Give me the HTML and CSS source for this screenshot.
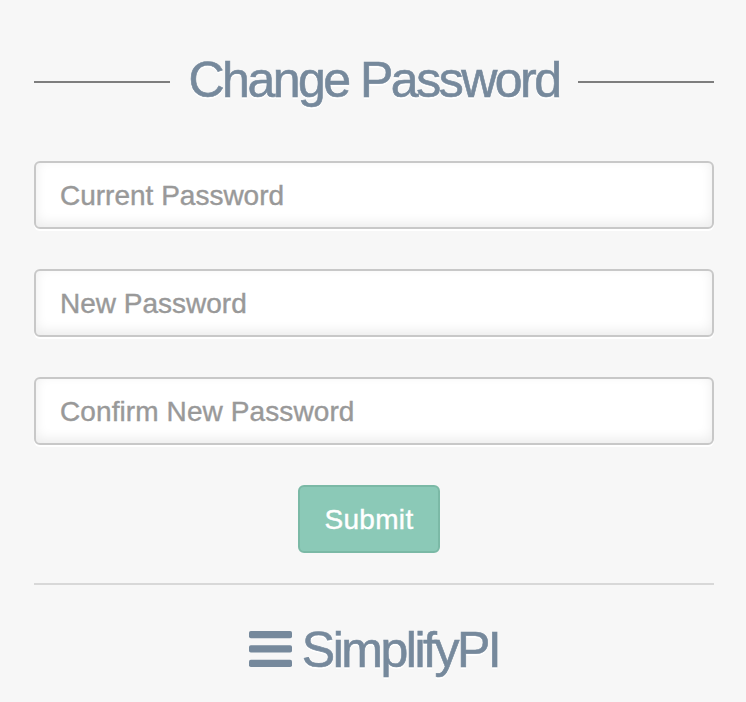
FILE: index.html
```html
<!DOCTYPE html>
<html lang="en">
<head>
    <meta charset="UTF-8">
    <meta name="viewport" content="width=device-width, initial-scale=1.0">
    <title>Change Password</title>
    <link rel="stylesheet" href="styles.css">
</head>
<body>
    <section class="login-content">
        <form>
            <h1><span>Change Password</span></h1>
            <input type="password" class="form-control" placeholder="Current Password">
            <input type="password" class="form-control" placeholder="New Password">
            <input type="password" class="form-control confirm" placeholder="Confirm New Password">
            <button type="button" class="submit">Submit</button>
        </form>

        <!-- Footer with brand -->
        <div class="separator">
            <svg class="bars" width="43" height="36" viewBox="0 0 43 36">
                <rect x="0" y="0" width="43" height="7.3" rx="1.8"/>
                <rect x="0" y="14.3" width="43" height="7.3" rx="1.8"/>
                <rect x="0" y="28.7" width="43" height="7.3" rx="1.8"/>
            </svg>
            <span class="brand">SimplifyPI</span>
        </div>
    </section>
</body>
</html>
```
FILE: styles.css
```css
* {
    box-sizing: border-box;
}
body {
    margin: 0;
    background-color: #f7f7f7;
    color: #76899c;
    font-family: "Liberation Sans", Helvetica, Arial, sans-serif;
}
.login-content {
    width: 680px;
    margin-left: 34px;
    padding-top: 50px;
    text-align: center;
    text-shadow: 0 2px 0 #fff;
}
h1 {
    display: flex;
    align-items: center;
    gap: 18px;
    height: 60px;
    margin: 0 0 51px;
    font-size: 50px;
    font-weight: normal;
    letter-spacing: -2.5px;
    white-space: nowrap;
    -webkit-text-stroke: 0.6px #76899c;
}
/* Lines on both sides of the heading */
h1::before,
h1::after {
    content: "";
    flex: 1;
    height: 2px;
    margin-top: 3px;
    background-color: #7e7e7e;
}
.form-control {
    display: block;
    width: 100%;
    height: 68px;
    margin: 0 0 40px;
    padding: 2px 24px 0;
    border: 2px solid #c8c8c8;
    border-radius: 6px;
    background-color: #fff;
    box-shadow: 0 2px 0 #fff, inset 0 -4px 12px rgba(0, 0, 0, 0.08);
    font-family: inherit;
    font-size: 28px;
}
.form-control::placeholder {
    color: #999;
    -webkit-text-stroke: 0.4px #999;
}
.confirm {
    letter-spacing: 0.1px;
}
.submit {
    display: block;
    width: 142px;
    height: 68px;
    margin: 0 0 0 264px;
    padding: 2px 0 0;
    border: 2px solid #7bb9a6;
    border-radius: 6px;
    background-color: #8bc9b7;
    color: #fff;
    font-family: inherit;
    font-size: 28px;
    letter-spacing: 0.3px;
    -webkit-text-stroke: 0.4px #fff;
}
.separator {
    display: flex;
    justify-content: center;
    align-items: center;
    gap: 10px;
    margin-top: 30px;
    padding-top: 35px;
    border-top: 2px solid #d8d8d8;
}
.bars {
    margin-bottom: 2px;
    fill: #76899c;
}
.brand {
    font-size: 50px;
    line-height: 60px;
    letter-spacing: -2.5px;
    -webkit-text-stroke: 0.6px #76899c;
}
```
